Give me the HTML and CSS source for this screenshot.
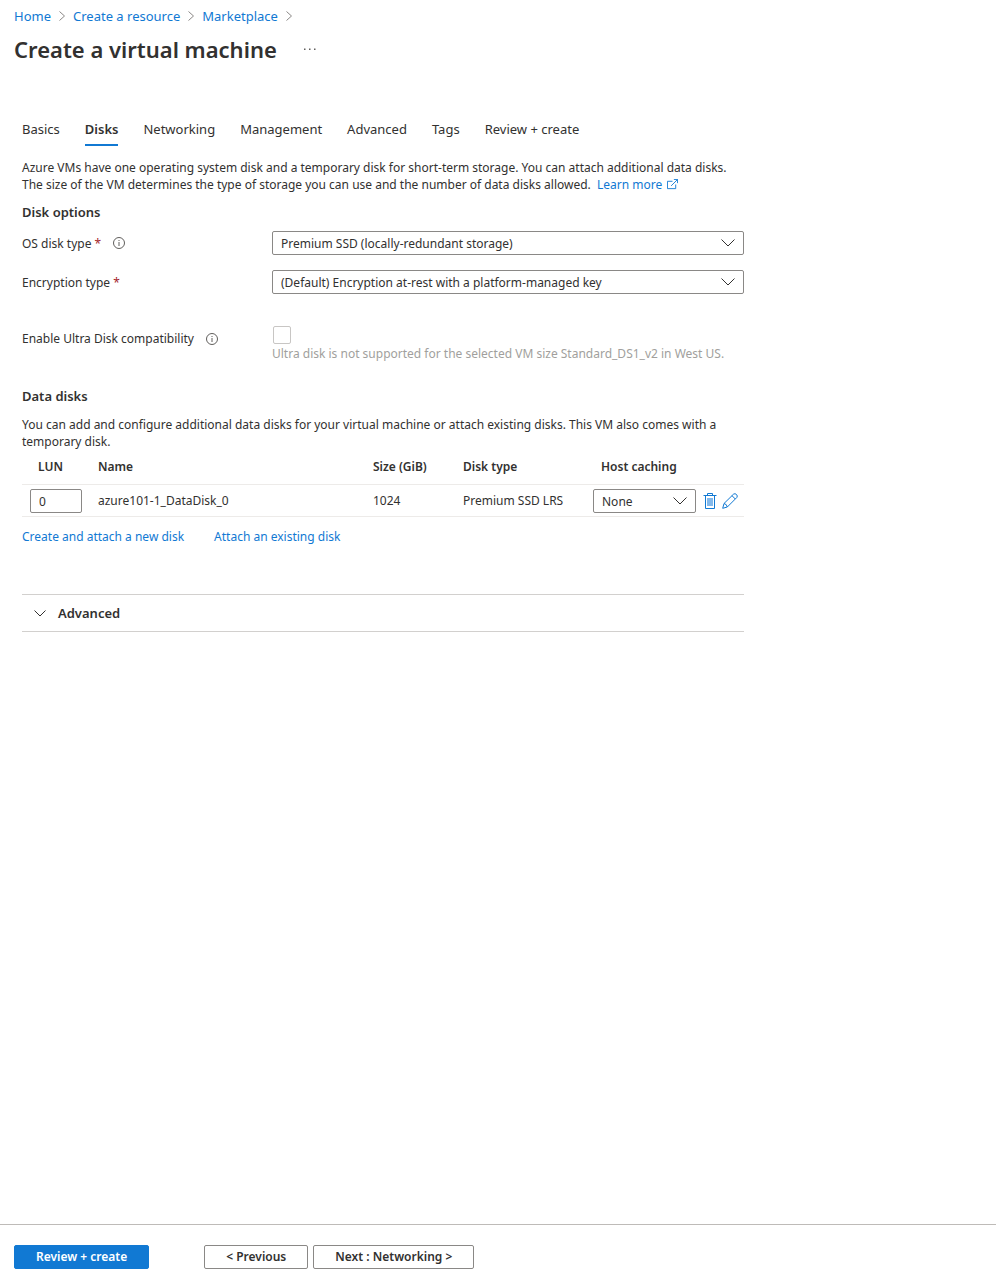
FILE: index.html
```html
<!DOCTYPE html>
<html lang="en">
<head>
    <meta charset="UTF-8">
    <meta name="viewport" content="width=device-width, initial-scale=1.0">
    <title>Create a virtual machine</title>
    <link rel="stylesheet" href="styles.css">
</head>
<body>
    <header class="top">
        <nav class="breadcrumb">
            <a href="#">Home</a>
            <svg class="crumb-arrow" viewBox="0 0 6 10"><path d="M0.5 0.5 5.5 5 0.5 9.5"/></svg>
            <a href="#">Create a resource</a>
            <svg class="crumb-arrow" viewBox="0 0 6 10"><path d="M0.5 0.5 5.5 5 0.5 9.5"/></svg>
            <a href="#">Marketplace</a>
            <svg class="crumb-arrow" viewBox="0 0 6 10"><path d="M0.5 0.5 5.5 5 0.5 9.5"/></svg>
        </nav>
        <div class="title">
            <h1>Create a virtual machine</h1>
            <button class="more" aria-label="More">
                <svg viewBox="0 0 12 2"><path d="M0 .5h1.500V2H0zM5 .5h1.500V2H5zM10 .5h1.500V2H10z"/></svg>
            </button>
        </div>
    </header>

    <main class="content">
        <nav class="tabs">
            <a href="#">Basics</a>
            <a href="#" class="active">Disks</a>
            <a href="#">Networking</a>
            <a href="#">Management</a>
            <a href="#">Advanced</a>
            <a href="#">Tags</a>
            <a href="#">Review + create</a>
        </nav>

        <p class="intro">Azure VMs have one operating system disk and a temporary disk for short-term storage. You can attach additional data disks. The size of the VM determines the type of storage you can use and the number of data disks allowed. <a href="#" class="learn">Learn more<svg class="external" viewBox="0 0 12 12"><path d="M6 2.500H.5v8h9V6M7.500.5h4v4M11.500.5 4.500 7.500"/></svg></a></p>

        <h2>Disk options</h2>
        <div class="field">
            <div class="label">
                <label for="os-disk">OS disk type <span class="required">*</span></label>
                <svg class="info" viewBox="0 0 12 12"><circle cx="6" cy="6" r="5.500"/><path d="M6 5v4M6 3v1"/></svg>
            </div>
            <select id="os-disk">
                <option>Premium SSD (locally-redundant storage)</option>
            </select>
        </div>
        <div class="field">
            <div class="label">
                <label for="encryption">Encryption type <span class="required">*</span></label>
            </div>
            <select id="encryption">
                <option>(Default) Encryption at-rest with a platform-managed key</option>
            </select>
        </div>
        <div class="field ultra">
            <div class="label">
                <label for="ultra-disk">Enable Ultra Disk compatibility</label>
                <svg class="info" viewBox="0 0 12 12"><circle cx="6" cy="6" r="5.500"/><path d="M6 5v4M6 3v1"/></svg>
            </div>
            <div class="check">
                <input type="checkbox" id="ultra-disk" disabled>
                <p>Ultra disk is not supported for the selected VM size Standard_DS1_v2 in West US.</p>
            </div>
        </div>

        <h2 class="data-title">Data disks</h2>
        <p class="data-text">You can add and configure additional data disks for your virtual machine or attach existing disks. This VM also comes with a temporary disk.</p>
        <table class="disks">
            <thead>
                <tr>
                    <th class="lun">LUN</th>
                    <th class="name">Name</th>
                    <th class="size">Size (GiB)</th>
                    <th class="type">Disk type</th>
                    <th class="caching">Host caching</th>
                </tr>
            </thead>
            <tbody>
                <tr>
                    <td class="lun-cell"><input type="text" class="lun-input" value="0" aria-label="LUN"></td>
                    <td>azure101-1_DataDisk_0</td>
                    <td>1024</td>
                    <td>Premium SSD LRS</td>
                    <td class="caching-cell">
                        <div class="caching-box">
                            <select aria-label="Host caching">
                                <option>None</option>
                            </select>
                            <button class="icon" aria-label="Delete">
                                <svg class="trash" viewBox="0 0 14 16"><path class="fill" d="M4 5h6v8H4z"/><path d="M.5 2.500h13M4.500 2.500v-2h5v2M2.500 2.500v13h9v-13"/></svg>
                            </button>
                            <button class="icon" aria-label="Edit">
                                <svg class="pencil" viewBox="0 0 16 16"><path d="M.7 15.300 2 10.500 11.500 1.200Q13 0 14.500 1.500 16 3 14.800 4.500L5.300 14ZM2 10.500Q4.800 11 5.300 14M10 2.700 13.300 6"/></svg>
                            </button>
                        </div>
                    </td>
                </tr>
            </tbody>
        </table>
        <div class="links">
            <a href="#">Create and attach a new disk</a>
            <a href="#">Attach an existing disk</a>
        </div>

        <button class="accordion">
            <svg viewBox="0 0 12 7"><path d="M.5.5 6 6 11.500.5"/></svg>
            Advanced
        </button>
    </main>

    <footer class="footer">
        <button class="btn primary">Review + create</button>
        <button class="btn">&lt; Previous</button>
        <button class="btn">Next : Networking &gt;</button>
    </footer>
</body>
</html>
```
FILE: styles.css
```css
*{
    box-sizing: border-box;
}
body{
    margin: 0;
    min-height: 100vh;
    display: flex;
    flex-direction: column;
    font-family: "Noto Sans", "Open Sans", sans-serif;
    font-size: 12px;
    line-height: 17px;
    color: #323130;
    background: #fff;
}
h1, h2, p{
    margin: 0;
}
a{
    color: #1179d3;
    text-decoration: none;
}
svg{
    fill: none;
    stroke: currentColor;
}
button, input, select{
    font: inherit;
    color: inherit;
}
.top{
    padding: 6px 14px 0;
}
.breadcrumb{
    display: flex;
    align-items: center;
    gap: 8px;
    font-size: 13px;
    line-height: 20px;
}
.crumb-arrow{
    width: 6px;
    height: 10px;
    color: #8a8886;
}
.title{
    display: flex;
    align-items: center;
    gap: 27px;
    margin-top: 7px;
}
.title h1{
    font-size: 22px;
    line-height: 32px;
    font-weight: 600;
}
.more{
    display: flex;
    padding: 0;
    border: 0;
    background: none;
    cursor: pointer;
}
.more svg{
    width: 12px;
    height: 2px;
    fill: #605e5c;
    stroke: none;
}
.content{
    flex: 1;
    width: 100%;
    max-width: 766px;
    padding: 49px 22px 0;
}
.tabs{
    display: flex;
    gap: 25px;
    font-size: 13px;
    line-height: 30px;
}
.tabs a{
    color: #323130;
    border-bottom: 2px solid transparent;
}
.tabs .active{
    font-weight: 600;
    border-color: #1179d3;
}
.intro{
    margin-top: 13px;
}
.learn{
    display: inline-flex;
    align-items: center;
    gap: 5px;
    margin-left: 3px;
}
.external{
    width: 11px;
    height: 11px;
}
h2{
    font-size: 13px;
    line-height: 20px;
    font-weight: 600;
    margin-top: 9px;
}
.field{
    display: grid;
    grid-template-columns: 250px 1fr;
    margin-top: 15px;
}
h2 + .field{
    margin-top: 9px;
}
.label{
    display: flex;
    align-items: center;
    gap: 12px;
}
.required{
    color: #a4262c;
}
.info{
    width: 12px;
    height: 12px;
    color: #605e5c;
}
select{
    appearance: none;
    width: 100%;
    height: 24px;
    padding: 0 30px 0 8px;
    border: 1px solid #8a8886;
    border-radius: 2px;
    background: url("data:image/svg+xml,%3Csvg xmlns='http://www.w3.org/2000/svg' width='14' height='8' fill='none' stroke='%23323130'%3E%3Cpath d='M.5.5 7 7 13.500.5'/%3E%3C/svg%3E") no-repeat right 8px center;
}
.ultra{
    margin-top: 32px;
}
.ultra .label{
    align-self: start;
    margin-top: 4px;
}
.check input{
    appearance: none;
    display: block;
    width: 18px;
    height: 18px;
    margin: 0 0 1px 1px;
    border: 1px solid #c8c6c4;
    border-radius: 2px;
}
.check p{
    color: #a19f9d;
}
.data-title{
    margin-top: 24px;
}
.data-text{
    margin-top: 10px;
}
.disks{
    width: 100%;
    table-layout: fixed;
    border-collapse: collapse;
}
.disks th{
    height: 34px;
    padding: 0 8px;
    text-align: left;
    font-weight: 600;
}
.disks td{
    height: 32px;
    padding: 0 8px;
    border-top: 1px solid #edebe9;
    border-bottom: 1px solid #edebe9;
}
.disks .lun{
    width: 68px;
    padding-left: 16px;
}
.disks .size{
    width: 90px;
}
.disks .type{
    width: 138px;
}
.disks .caching{
    width: 151px;
}
.disks .lun-cell{
    padding-top: 2px;
}
.disks .caching-cell{
    padding: 2px 0 0;
}
.lun-input{
    display: block;
    width: 52px;
    height: 24px;
    padding: 0 8px;
    border: 1px solid #8a8886;
    border-radius: 2px;
}
.caching-box{
    display: flex;
    align-items: center;
}
.caching-box select{
    width: 103px;
    margin-right: 4px;
}
.icon{
    display: flex;
    padding: 0 2px;
    border: 0;
    background: none;
    color: #1179d3;
    cursor: pointer;
}
.icon svg{
    width: 16px;
    height: 16px;
}
.trash .fill{
    fill: #83b9eb;
    stroke: none;
}
.links{
    display: flex;
    gap: 30px;
    margin-top: 11px;
}
.accordion{
    display: flex;
    align-items: center;
    gap: 12px;
    width: 100%;
    height: 38px;
    margin-top: 49px;
    padding: 2px 12px 0;
    border: 0;
    border-top: 1px solid #d2d0ce;
    border-bottom: 1px solid #d2d0ce;
    background: none;
    font-size: 13px;
    font-weight: 600;
    cursor: pointer;
}
.accordion svg{
    width: 12px;
    height: 7px;
}
.footer{
    display: flex;
    gap: 5px;
    padding: 20px 14px 14px;
    border-top: 1px solid #bebbb8;
}
.btn{
    height: 24px;
    padding: 0 21px;
    border: 1px solid #8a8886;
    border-radius: 2px;
    background: #fff;
    font-weight: 600;
    line-height: 20px;
    cursor: pointer;
}
.primary{
    margin-right: 50px;
    border-color: #1179d3;
    background: #1179d3;
    color: #fff;
}
```
